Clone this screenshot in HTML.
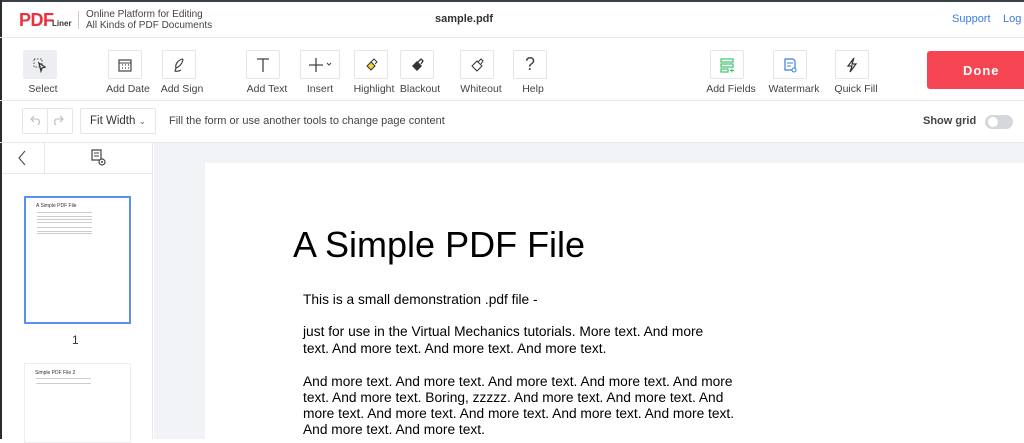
<!DOCTYPE html>
<html><head><style>
*{box-sizing:border-box;margin:0;padding:0}
body{width:1024px;height:439px;overflow:hidden;background:#fff;font-family:"Liberation Sans",sans-serif;position:relative;color:#333}
.a{position:absolute}
.btn{position:absolute;top:50px;width:34px;height:29px;border:1px solid #e3e5ea;border-radius:2px;background:#fff;display:flex;align-items:center;justify-content:center}
.lbl{position:absolute;top:83px;font-size:10.5px;color:#444;white-space:nowrap;transform:translateX(-50%)}
.pt{position:absolute;left:303px;font-size:13.75px;color:#000;white-space:nowrap;line-height:17px}
</style></head><body>
<div class="a" style="left:0;top:0;width:1024px;height:2px;background:#3a4048"></div>
<div class="a" style="left:0;top:0;width:2px;height:439px;background:#2a2e33"></div>
<!-- header -->
<div class="a" style="left:19px;top:10px;font-weight:bold;font-size:18px;color:#e8323f;letter-spacing:-0.5px">PDF</div>
<div class="a" style="left:52px;top:19px;font-size:8px;font-weight:bold;color:#333">Liner</div>
<div class="a" style="left:78px;top:11px;width:1px;height:18px;background:#ccc"></div>
<div class="a" style="left:86px;top:9px;font-size:10px;line-height:11px;color:#444">Online Platform for Editing<br>All Kinds of PDF Documents</div>
<div class="a" style="left:435px;top:13px;font-size:11px;font-weight:bold;color:#333">sample.pdf</div>
<div class="a" style="left:952px;top:13px;font-size:11px;color:#3b7ddd">Support</div>
<div class="a" style="left:1003px;top:13px;font-size:11px;color:#3b7ddd">Log</div>
<div class="a" style="left:0;top:37px;width:1024px;height:1px;background:#e6e8ec"></div>
<!-- toolbar -->
<div class="btn" style="left:23px;background:#eceef1;border-color:#eceef1"><svg width="16" height="16"><rect x="2" y="2" width="8" height="8" fill="none" stroke="#555" stroke-dasharray="1.5 1.5"/><path d="M7 6 L13 10 L10 11 L9 14 Z" fill="#fff" stroke="#333" stroke-width="1.3"/></svg></div>
<div class="lbl" style="left:43px">Select</div>
<div class="btn" style="left:108px"><svg width="16" height="16"><rect x="2" y="3" width="12" height="11" fill="none" stroke="#444" stroke-width="1.2"/><line x1="2" y1="6" x2="14" y2="6" stroke="#444"/><path d="M5 8h1M8 8h1M11 8h1M5 11h1M8 11h1M11 11h1" stroke="#444" stroke-width="1.3"/></svg></div>
<div class="lbl" style="left:128px">Add Date</div>
<div class="btn" style="left:162px"><svg width="16" height="16"><path d="M11 2 C6 4 4 8 5 11 C8 10 11 7 12 3Z M5 11 L4 14 Q7 15 10 13" fill="none" stroke="#444" stroke-width="1.2"/></svg></div>
<div class="lbl" style="left:182px">Add Sign</div>
<div class="btn" style="left:246px"><svg width="18" height="18"><path d="M3 3h12M9 3v13" stroke="#444" stroke-width="1.3"/></svg></div>
<div class="lbl" style="left:267px">Add Text</div>
<div class="btn" style="left:300px;width:40px"><svg width="28" height="18"><path d="M3 9h14M10 2v14" stroke="#444" stroke-width="1.3"/><path d="M21 7l2 2 2-2" fill="none" stroke="#444"/></svg></div>
<div class="lbl" style="left:320px">Insert</div>
<div class="btn" style="left:354px"><svg width="16" height="16"><path d="M4 9 L8 5 L12 9 L8 13Z" fill="#f4d23c" stroke="#333"/><path d="M8 5 L11 2 L14 5 L12 7" fill="none" stroke="#333"/></svg></div>
<div class="lbl" style="left:374px">Highlight</div>
<div class="btn" style="left:400px"><svg width="16" height="16"><path d="M3 9 L8 4 L13 9 L8 14Z" fill="#333"/><path d="M9 5 L12 2 L14 4 L12 7" fill="none" stroke="#333" stroke-width="1.3"/></svg></div>
<div class="lbl" style="left:420px">Blackout</div>
<div class="btn" style="left:460px"><svg width="16" height="16"><path d="M3 9 L8 4 L13 9 L8 14Z M9 5 L12 2 L14 4 L12 7" fill="none" stroke="#333"/></svg></div>
<div class="lbl" style="left:481px">Whiteout</div>
<div class="btn" style="left:513px;font-size:18px;color:#444">?</div>
<div class="lbl" style="left:533px">Help</div>
<div class="btn" style="left:710px"><svg width="18" height="16"><rect x="3" y="2" width="12" height="3" fill="none" stroke="#3cc36a" stroke-width="1.2"/><rect x="3" y="7" width="12" height="3" fill="none" stroke="#3cc36a" stroke-width="1.2"/><rect x="3" y="12" width="7" height="3" fill="none" stroke="#3cc36a" stroke-width="1.2"/><path d="M12 13.5h4M14 11.5v4" stroke="#3cc36a"/></svg></div>
<div class="lbl" style="left:731px">Add Fields</div>
<div class="btn" style="left:773px"><svg width="16" height="16"><path d="M3 2h8l2 2v9H3Z" fill="none" stroke="#3b7ddd" stroke-width="1.2"/><path d="M5 6h6M5 9h4" stroke="#3b7ddd"/><circle cx="12" cy="13" r="2" fill="#fff" stroke="#3b7ddd"/></svg></div>
<div class="lbl" style="left:794px">Watermark</div>
<div class="btn" style="left:835px"><svg width="16" height="16"><path d="M10 1 L4 9 H8 L6 15 L12 7 H8 Z" fill="none" stroke="#333" stroke-width="1.2"/></svg></div>
<div class="lbl" style="left:856px">Quick Fill</div>
<div class="a" style="left:927px;top:51px;width:110px;height:38px;background:#f64552;border-radius:3px;color:#fff;font-weight:bold;font-size:13px;letter-spacing:1px;padding:12px 0 0 36px">Done</div>
<div class="a" style="left:0;top:100px;width:1024px;height:1px;background:#e6e8ec"></div>
<!-- subtoolbar -->
<div class="a" style="left:22px;top:108px;width:51px;height:26px;border:1px solid #e3e5ea;border-radius:2px"></div>
<div class="a" style="left:47px;top:108px;width:1px;height:26px;background:#e3e5ea"></div>
<svg class="a" style="left:28px;top:113px" width="40" height="16"><path d="M6 5 L3 8 L6 11 M3 8 H10 A4 4 0 0 1 10 14" fill="none" stroke="#bbb" stroke-width="1.1" transform="translate(0,-2)"/><path d="M32 5 L35 8 L32 11 M35 8 H28 A4 4 0 0 0 28 14" fill="none" stroke="#bbb" stroke-width="1.1" transform="translate(0,-2)"/></svg>
<div class="a" style="left:80px;top:108px;width:76px;height:26px;border:1px solid #e3e5ea;border-radius:2px;font-size:11.5px;color:#333;padding:6px 0 0 9px">Fit Width <span style="font-size:9px;color:#666">&#8964;</span></div>
<div class="a" style="left:169px;top:115px;font-size:11px;color:#444">Fill the form or use another tools to change page content</div>
<div class="a" style="left:923px;top:115px;font-size:11px;font-weight:bold;color:#444">Show grid</div>
<div class="a" style="left:985px;top:115px;width:28px;height:14px;border-radius:7px;background:#d4d7dc"><div style="position:absolute;left:3px;top:2px;width:10px;height:10px;border-radius:5px;background:#fff"></div></div>
<div class="a" style="left:0;top:142px;width:1024px;height:1px;background:#e6e8ec"></div>
<!-- sidebar -->
<div class="a" style="left:2px;top:143px;width:151px;height:296px;background:#fff;border-right:1px solid #e6e8ec"></div>
<div class="a" style="left:44px;top:143px;width:1px;height:30px;background:#e6e8ec"></div>
<div class="a" style="left:2px;top:173px;width:151px;height:1px;background:#e6e8ec"></div>
<svg class="a" style="left:16px;top:149px" width="12" height="18"><path d="M9 2 L3 9 L9 16" fill="none" stroke="#555" stroke-width="1.2"/></svg>
<svg class="a" style="left:89px;top:148px" width="20" height="20"><path d="M3 2h9v10H3Z" fill="none" stroke="#444" stroke-width="1.2"/><path d="M5 5h5M5 8h5" stroke="#444"/><circle cx="13" cy="14" r="3" fill="#fff" stroke="#444" stroke-width="1.2"/><circle cx="13" cy="14" r="1" fill="#444"/></svg>
<div class="a" style="left:24px;top:196px;width:107px;height:128px;border:2px solid #5b8ff0;background:#fff"></div>
<div class="a" style="left:36px;top:203px;font-size:5px;color:#333">A Simple PDF File</div>
<div class="a" style="left:37px;top:212px;width:55px;height:1px;background:#ccc"></div>
<div class="a" style="left:37px;top:216px;width:55px;height:4px;border-top:1px solid #ccc;border-bottom:1px solid #ccc"></div>
<div class="a" style="left:37px;top:222px;width:55px;height:6px;border-top:1px solid #ccc;border-bottom:1px solid #ccc"></div>
<div class="a" style="left:37px;top:231px;width:55px;height:3px;border-top:1px solid #ccc;border-bottom:1px solid #ccc"></div>
<div class="a" style="left:72px;top:333px;font-size:12px;color:#333">1</div>
<div class="a" style="left:24px;top:363px;width:107px;height:80px;border:1px solid #eceef1;background:#fff"></div>
<div class="a" style="left:35px;top:370px;font-size:5px;color:#333">Simple PDF File 2</div>
<div class="a" style="left:36px;top:378px;width:55px;height:6px;border-top:1px solid #ccc;border-bottom:1px solid #ccc"></div>
<!-- main -->
<div class="a" style="left:154px;top:143px;width:870px;height:296px;background:#f2f3f6"></div>
<div class="a" style="left:205px;top:163px;width:819px;height:276px;background:#fff"></div>
<div class="a" style="left:293px;top:224px;font-size:36px;color:#000;white-space:nowrap">A Simple PDF File</div>
<div class="pt" style="top:291px">This is a small demonstration .pdf file -</div>
<div class="pt" style="top:323px">just for use in the Virtual Mechanics tutorials. More text. And more</div>
<div class="pt" style="top:340px">text. And more text. And more text. And more text.</div>
<div class="pt" style="top:373px">And more text. And more text. And more text. And more text. And more</div>
<div class="pt" style="top:389px">text. And more text. Boring, zzzzz. And more text. And more text. And</div>
<div class="pt" style="top:405px">more text. And more text. And more text. And more text. And more text.</div>
<div class="pt" style="top:421px">And more text. And more text.</div>
</body></html>
